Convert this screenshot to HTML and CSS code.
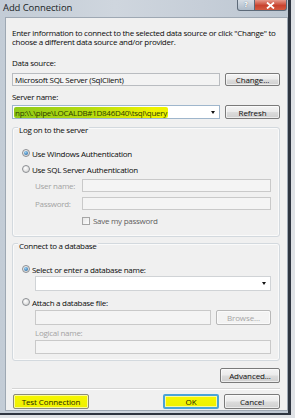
FILE: index.html
```html
<!DOCTYPE html>
<html>
<head>
    <title>Add Connection</title>
    <link rel="stylesheet" href="styles.css">
</head>
<body>
    <div class="window">
        <div class="titlebar">
            <span class="title">Add Connection</span>
            <div class="caption-buttons">
                <span class="cap help">?</span>
                <span class="cap close">
                    <svg width="9" height="7" viewBox="0 0 9 7"><path d="M1 0.5 L8 6.5 M8 0.5 L1 6.5" stroke="#fff" stroke-width="1.8"/></svg>
                </span>
            </div>
        </div>

        <div class="panel">
            <p class="intro">Enter information to connect to the selected data source or click "Change" to choose a different data source and/or provider.</p>

            <div class="label first">Data source:</div>
            <div class="row">
                <div class="textbox readonly">Microsoft SQL Server (SqlClient)</div>
                <button class="btn side">Change...</button>
            </div>

            <div class="label">Server name:</div>
            <div class="row server-row">
                <div class="textbox combo server">
                    <span class="highlight">np:\\.\pipe\LOCALDB#1D846D40\tsql\query</span>
                    <span class="arrow"></span>
                </div>
                <button class="btn side">Refresh</button>
            </div>

            <div class="group logon">
                <span class="group-title">Log on to the server</span>
                <div class="option first-option"><span class="radio checked"></span>Use Windows Authentication</div>
                <div class="option second-option"><span class="radio"></span>Use SQL Server Authentication</div>
                <div class="field-row">
                    <span class="field-label">User name:</span>
                    <div class="textbox disabled"></div>
                </div>
                <div class="field-row">
                    <span class="field-label">Password:</span>
                    <div class="textbox disabled"></div>
                </div>
                <div class="check-row"><span class="checkbox"></span>Save my password</div>
            </div>

            <div class="group database">
                <span class="group-title">Connect to a database</span>
                <div class="option first-option"><span class="radio checked"></span>Select or enter a database name:</div>
                <div class="textbox combo db-combo"><span class="arrow"></span></div>
                <div class="option attach-option"><span class="radio"></span>Attach a database file:</div>
                <div class="file-row">
                    <div class="textbox disabled"></div>
                    <button class="btn disabled-btn">Browse...</button>
                </div>
                <div class="sub-label">Logical name:</div>
                <div class="textbox disabled logical"></div>
            </div>

            <div class="advanced-row">
                <button class="btn advanced">Advanced...</button>
            </div>
            <div class="separator"></div>
            <div class="footer">
                <button class="btn marked test">Test Connection</button>
                <div class="footer-right">
                    <button class="btn marked ok">OK</button>
                    <button class="btn">Cancel</button>
                </div>
            </div>
        </div>
    </div>
</body>
</html>
```

FILE: styles.css
```css
* {
    box-sizing: border-box;
}

body {
    margin: 0;
    background-color: #dfe2e6;
    font-family: "Open Sans", "Noto Sans", sans-serif;
    font-size: 8px;
    letter-spacing: -0.28px;
    color: #0a0a0a;
}

.window {
    width: 291px;
    height: 415px;
    display: flex;
    flex-direction: column;
    background: linear-gradient(90deg, #c3ccd6 0%, #cfd6de 40%, #c6ced8 70%, #bcc6d1 100%);
    border-right: 3px solid #2e3540;
    border-bottom: 2px solid #2e3540;
}

.titlebar {
    height: 17px;
    display: flex;
    justify-content: space-between;
    align-items: flex-start;
    padding-left: 3px;
}

.title {
    font-size: 9.5px;
    letter-spacing: -0.1px;
    line-height: 16px;
    color: #1a1f26;
}

.caption-buttons {
    display: flex;
    margin-right: 1px;
}

.cap {
    height: 11px;
    display: flex;
    align-items: center;
    justify-content: center;
    border: 1px solid #5d6a79;
    border-top: none;
}

.help {
    width: 18px;
    border-radius: 0 0 0 3px;
    background: linear-gradient(#d6dde5, #aebbc9);
    color: #fff;
    font-family: "DejaVu Sans", sans-serif;
    font-size: 7px;
    font-weight: bold;
    text-shadow: 0 0 1px #4a5766;
}

.close {
    width: 32px;
    border-left: none;
    border-radius: 0 0 3px 0;
    background: linear-gradient(#e69a8c, #c8432f 55%, #d45a40);
}

.panel {
    flex: 1;
    margin: 0 0 2px 5px;
    background-color: #f0f0f0;
    border: 1px solid #9ea8b3;
    padding: 10px 7px 0 6px;
}

.intro {
    margin: 0;
    line-height: 9px;
}

.label {
    line-height: 9px;
    margin-top: 6px;
}

.label.first {
    margin-top: 12px;
}

.row {
    display: flex;
    gap: 5px;
    margin-top: 6px;
    height: 13px;
}

.server-row {
    margin-top: 4px;
    height: 14px;
}

.textbox {
    flex: 1;
    height: 100%;
    border: 1px solid #c4c8cc;
    background-color: #fff;
    display: flex;
    align-items: center;
    padding-left: 2px;
    white-space: nowrap;
    overflow: hidden;
}

.textbox.readonly {
    background-color: #f3f3f3;
    border-color: #b9bcc0;
}

.textbox.disabled {
    background-color: #f4f4f4;
    border-color: #c9c9c9;
}

.combo {
    justify-content: space-between;
    padding: 0 4px 0 1px;
}

.server {
    border-color: #9fb6cc;
}

.highlight {
    height: 11px;
    line-height: 11px;
    padding: 0 1px;
    color: #2d3d00;
    background: linear-gradient(90deg, #8fca18, #b7dc10 50%, #eef200 90%);
    border-radius: 2px;
}

.arrow {
    width: 0;
    height: 0;
    border-left: 2.5px solid transparent;
    border-right: 2.5px solid transparent;
    border-top: 3px solid #111;
}

.btn {
    font-family: inherit;
    font-size: 8px;
    letter-spacing: -0.1px;
    color: #111;
    padding: 0;
    height: 15px;
    width: 56px;
    border: 1px solid #7a7a7a;
    border-radius: 2px;
    background: linear-gradient(#f4f4f4 0%, #ebebeb 48%, #dcdcdc 52%, #cfcfcf 100%);
    box-shadow: inset 0 0 0 1px rgba(255, 255, 255, 0.6);
}

.btn.side {
    width: 55px;
    height: 100%;
}

.group {
    border: 1px solid #d3d9de;
    border-radius: 3px;
    box-shadow: inset 0 0 0 1px #fafafa;
    padding: 0 8px 0 9px;
}

.group.logon {
    margin-top: 8px;
    padding-bottom: 11px;
}

.group.database {
    margin-top: 6px;
    padding-bottom: 6px;
}

.group-title {
    display: inline-block;
    margin: -3px 0 0 -4px;
    padding: 0 1px;
    line-height: 9px;
    background-color: #f0f0f0;
    vertical-align: top;
}

.option {
    display: flex;
    align-items: center;
    gap: 2px;
    height: 10px;
}

.option.first-option {
    margin-top: 9px;
}

.option.second-option {
    margin-top: 6px;
}

.option.attach-option {
    margin-top: 6px;
}

.radio {
    width: 8px;
    height: 8px;
    border-radius: 50%;
    border: 1px solid #8c8f93;
    background: radial-gradient(circle at 40% 35%, #ffffff, #dcdcdc 70%, #c4c4c4);
    display: flex;
    align-items: center;
    justify-content: center;
}

.radio.checked::after {
    content: "";
    width: 4px;
    height: 4px;
    border-radius: 50%;
    background: radial-gradient(circle at 40% 35%, #9cd3f5, #2d6ea8 80%);
}

.field-row {
    display: flex;
    align-items: center;
    height: 13px;
    margin: 5px 0 0 13px;
}

.field-label {
    width: 47px;
    color: #a3a3a3;
}

.check-row {
    display: flex;
    align-items: center;
    gap: 3px;
    height: 9px;
    margin: 6px 0 0 60px;
    color: #5e5e5e;
}

.checkbox {
    width: 8px;
    height: 8px;
    border: 1px solid #a6a6a6;
    background: linear-gradient(135deg, #e6e6e6, #fdfdfd);
}

.db-combo {
    flex: none;
    height: 15px;
    margin: 2px 0 0 13px;
    justify-content: flex-end;
    border-color: #d0d3d6;
}

.file-row {
    display: flex;
    gap: 5px;
    height: 15px;
    margin: 3px 0 0 13px;
}

.btn.disabled-btn {
    width: 55px;
    height: 100%;
    color: #a5a5a5;
    border-color: #b8b8b8;
    background: #f3f3f3;
}

.sub-label {
    margin: 3px 0 0 13px;
    line-height: 9px;
    color: #a3a3a3;
}

.textbox.logical {
    flex: none;
    height: 14px;
    margin: 3px 0 0 13px;
}

.advanced-row {
    display: flex;
    justify-content: flex-end;
    margin-top: 7px;
}

.btn.advanced {
    width: 60px;
}

.separator {
    margin-top: 5px;
    border-top: 1px solid #d5d5d5;
    border-bottom: 1px solid #fff;
}

.footer {
    display: flex;
    justify-content: space-between;
    margin: 4px 0 0 1px;
}

.footer-right {
    display: flex;
    gap: 5px;
}

.btn.marked {
    background: linear-gradient(#f6f600, #eef000);
    color: #1e1e00;
}

.btn.test {
    width: 76px;
    border-color: #8a8a7a;
}

.btn.ok {
    border: 2px solid #4aa3d8;
}
```
